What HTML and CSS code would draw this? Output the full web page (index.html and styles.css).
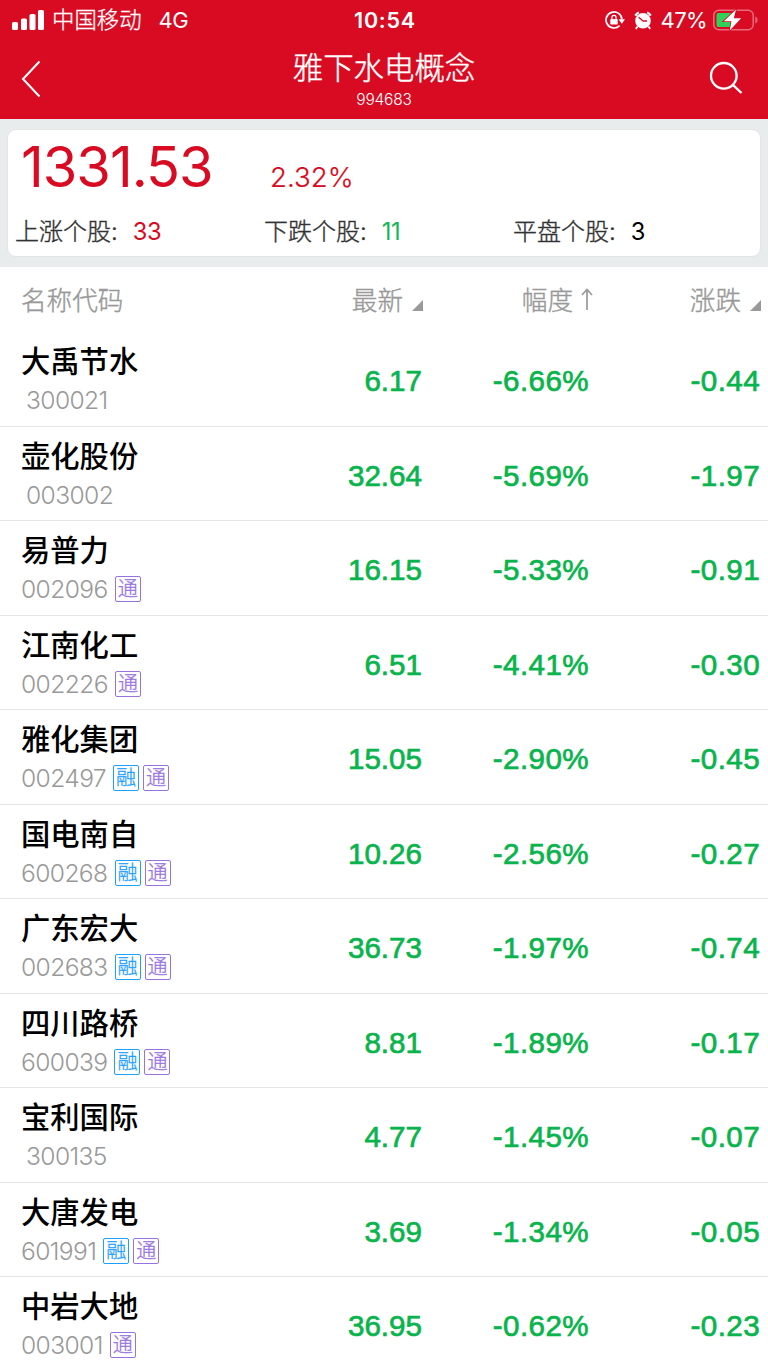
FILE: index.html
```html
<!DOCTYPE html>
<html lang="zh-CN">
  <head>
    <meta charset="UTF-8" />
    <meta name="viewport" content="width=device-width, initial-scale=1.0" />
    <title>雅下水电概念</title>
    <link rel="stylesheet" href="styles.css">
  </head>
  <body>
    <header class="top">
      <div class="status">
        <div class="status-left">
          <svg class="signal" width="32" height="20" viewBox="0 0 32 20" fill="#fff">
            <rect x="0" y="12" width="6" height="8" rx="1.6" />
            <rect x="9" y="8.500" width="6" height="11.500" rx="1.6" />
            <rect x="17.500" y="4" width="6" height="16" rx="1.6" />
            <rect x="26" y="0" width="6" height="20" rx="1.6" />
          </svg>
          <span class="carrier">中国移动</span>
          <span class="network">4G</span>
        </div>
        <div class="time">10:54</div>
        <div class="status-right">
          <svg class="lock" width="20" height="18" viewBox="0 0 20 18" fill="none" stroke="#fff">
            <path d="M14.600 14.700A8 8 0 1 1 17 8.500" stroke-width="1.700" />
            <path d="M13.600 8.200h6.400l-3.200 4.600z" fill="#fff" stroke="none" />
            <rect x="5.300" y="8" width="7.400" height="5.400" rx=".7" fill="#fff" stroke="none" />
            <path d="M6.900 8.500V6.700a2.100 2.300 0 0 1 4.200 0v1.800" stroke-width="1.200" />
          </svg>
          <svg class="alarm" width="18" height="19" viewBox="0 0 18 19" fill="none" stroke="#fff">
            <circle cx="9" cy="9.700" r="7.800" fill="#fff" stroke="none" />
            <path d="M1.200 4.600A10 10 0 0 1 4.800 1.400M13.200 1.400a10 10 0 0 1 3.600 3.200" stroke-width="2.200" />
            <path d="M3.600 15.500l-1.800 2.400M14.400 15.500l1.800 2.400" stroke-width="1.800" />
            <path d="M4.600 6.200L9.200 10H13" stroke="#d80b23" stroke-width="1.300" />
          </svg>
          <span class="percent">47%</span>
          <svg class="battery" width="45" height="22" viewBox="0 0 45 22">
            <rect x=".8" y="1.300" width="39.400" height="19.400" rx="5" fill="none" stroke="#fff" stroke-opacity=".4" stroke-width="1.500" />
            <path d="M42.300 7.500c3 1.200 3 5.800 0 7z" fill="#fff" fill-opacity=".4" />
            <path d="M5.500 4h13v14h-13a2 2 0 0 1-2-2V6a2 2 0 0 1 2-2z" fill="#30d158" />
            <path d="M23 .5L10.800 12.300h7.700L16.700 21.500 28.200 9.300h-7.400z" fill="#fff" stroke="#d80b23" stroke-width="1.600" paint-order="stroke" />
          </svg>
        </div>
      </div>
      <div class="navbar">
        <svg class="back" width="20" height="38" viewBox="0 0 20 38" fill="none" stroke="#fff" stroke-width="2">
          <path d="M18.500 1.500L2 19l16.500 17.500" />
        </svg>
        <div class="title">
          <h1>雅下水电概念</h1>
          <p>994683</p>
        </div>
        <svg class="search" width="34" height="34" viewBox="0 0 34 34" fill="none" stroke="#fff" stroke-width="2.300">
          <circle cx="14.800" cy="14.800" r="12.800" />
          <path d="M23.900 23.900L32.500 32" />
        </svg>
      </div>
    </header>

    <section class="summary">
      <div class="card">
        <div class="quote">
          <span class="index">1331.53</span>
          <span class="change">2.32%</span>
        </div>
        <div class="counts">
          <div>上涨个股:<b class="red">33</b></div>
          <div>下跌个股:<b class="green">11</b></div>
          <div>平盘个股:<b>3</b></div>
        </div>
      </div>
    </section>

    <main class="list">
      <div class="row head">
        <span>名称代码</span>
        <span class="sort">最新<i class="corner"></i></span>
        <span class="sort">幅度<svg class="arrow" width="12" height="23" viewBox="0 0 12 23" fill="none" stroke="#999" stroke-width="1.700"><path d="M6 22V1.500M1 7l5-5.500L11 7" /></svg></span>
        <span class="sort">涨跌<i class="corner"></i></span>
      </div>

      <div class="row">
        <div class="stock"><h2>大禹节水</h2><p class="plain">300021</p></div>
        <span class="num">6.17</span><span class="num signed">-6.66%</span><span class="num signed">-0.44</span>
      </div>
      <div class="row">
        <div class="stock"><h2>壶化股份</h2><p class="plain">003002</p></div>
        <span class="num">32.64</span><span class="num signed">-5.69%</span><span class="num signed">-1.97</span>
      </div>
      <div class="row">
        <div class="stock"><h2>易普力</h2><p>002096<i class="tag tong">通</i></p></div>
        <span class="num">16.15</span><span class="num signed">-5.33%</span><span class="num signed">-0.91</span>
      </div>
      <div class="row">
        <div class="stock"><h2>江南化工</h2><p>002226<i class="tag tong">通</i></p></div>
        <span class="num">6.51</span><span class="num signed">-4.41%</span><span class="num signed">-0.30</span>
      </div>
      <div class="row">
        <div class="stock"><h2>雅化集团</h2><p>002497<i class="tag rong">融</i><i class="tag tong">通</i></p></div>
        <span class="num">15.05</span><span class="num signed">-2.90%</span><span class="num signed">-0.45</span>
      </div>
      <div class="row">
        <div class="stock"><h2>国电南自</h2><p>600268<i class="tag rong">融</i><i class="tag tong">通</i></p></div>
        <span class="num">10.26</span><span class="num signed">-2.56%</span><span class="num signed">-0.27</span>
      </div>
      <div class="row">
        <div class="stock"><h2>广东宏大</h2><p>002683<i class="tag rong">融</i><i class="tag tong">通</i></p></div>
        <span class="num">36.73</span><span class="num signed">-1.97%</span><span class="num signed">-0.74</span>
      </div>
      <div class="row">
        <div class="stock"><h2>四川路桥</h2><p>600039<i class="tag rong">融</i><i class="tag tong">通</i></p></div>
        <span class="num">8.81</span><span class="num signed">-1.89%</span><span class="num signed">-0.17</span>
      </div>
      <div class="row">
        <div class="stock"><h2>宝利国际</h2><p class="plain">300135</p></div>
        <span class="num">4.77</span><span class="num signed">-1.45%</span><span class="num signed">-0.07</span>
      </div>
      <div class="row">
        <div class="stock"><h2>大唐发电</h2><p>601991<i class="tag rong">融</i><i class="tag tong">通</i></p></div>
        <span class="num">3.69</span><span class="num signed">-1.34%</span><span class="num signed">-0.05</span>
      </div>
      <div class="row">
        <div class="stock"><h2>中岩大地</h2><p>003001<i class="tag tong">通</i></p></div>
        <span class="num">36.95</span><span class="num signed">-0.62%</span><span class="num signed">-0.23</span>
      </div>
    </main>
  </body>
</html>
```

FILE: styles.css
```css
* {
  box-sizing: border-box;
  margin: 0;
  padding: 0;
}
body {
  width: 768px;
  height: 1366px;
  overflow: hidden;
  background: #fff;
  color: #000;
  font-family: Inter, "Noto Sans CJK SC", sans-serif;
}
i {
  font-style: normal;
}
svg {
  display: block;
  flex: none;
}

/* status bar + nav */
.top {
  height: 119px;
  background: #d80b23;
  color: #fff;
}
.status {
  display: grid;
  grid-template-columns: 1fr auto 1fr;
  align-items: center;
  height: 40px;
  padding: 0 10px 0 12px;
}
.status-left,
.status-right {
  display: flex;
  align-items: center;
  font-size: 22px;
  line-height: 40px;
}
.status-right {
  justify-content: flex-end;
}
.carrier {
  margin-left: 8px;
  font-size: 22.4px;
  font-weight: 300;
  -webkit-text-stroke: 0.3px #fff;
}
.network {
  margin-left: 17px;
  letter-spacing: -0.4px;
}
.time {
  font-size: 21.5px;
  font-weight: 600;
  letter-spacing: 0.8px;
}
.alarm {
  margin-left: 9px;
}
.percent {
  margin-left: 9px;
  letter-spacing: -0.6px;
}
.battery {
  margin-left: 6px;
}
.navbar {
  display: grid;
  grid-template-columns: 1fr auto 1fr;
  height: 79px;
  padding: 0 21px;
}
.back {
  margin-top: 20px;
}
.title {
  text-align: center;
}
.title h1 {
  margin-top: 6px;
  font-size: 30.4px;
  font-weight: 300;
  line-height: 44px;
  -webkit-text-stroke: 0.4px #fff;
}
.title p {
  font-size: 15.5px;
  font-weight: 300;
  line-height: 20px;
  letter-spacing: -0.2px;
}
.search {
  justify-self: end;
  margin: 21px 4px 0 0;
}

/* index summary */
.summary {
  height: 148px;
  padding: 10px 7px;
  background: #e8ecec;
}
.card {
  height: 128px;
  padding: 0 8px 0 7px;
  border: 1px solid #e3e5e5;
  border-radius: 9px;
  background: #fff;
}
.quote {
  display: grid;
  grid-template-columns: 249px 1fr;
  align-items: baseline;
  height: 78px;
  padding-left: 6px;
  color: #d80b23;
}
.index {
  font-size: 56px;
  line-height: 75px;
  letter-spacing: -1px;
}
.change {
  font-size: 27.6px;
  font-weight: 300;
  -webkit-text-stroke: 0.2px #d80b23;
}
.counts {
  display: grid;
  grid-template-columns: 249px 249px 1fr;
  color: #333;
  font-size: 24px;
  font-weight: 300;
  line-height: 48px;
  -webkit-text-stroke: 0.4px;
}
.counts b {
  margin-left: 15px;
  color: #000;
  font-size: 23.7px;
  font-weight: 400;
  letter-spacing: -0.5px;
  -webkit-text-stroke: 0;
}
.counts .red {
  color: #d80b23;
}
.counts .green {
  color: #12b755;
}

/* stock list */
.row {
  display: grid;
  grid-template-columns: 221px 180px 167px 171px;
  height: 94.55px;
  padding-left: 21px;
  border-bottom: 1px solid #e6e6e6;
}
.head {
  height: 65px;
  border: none;
  color: #999;
  font-size: 25.6px;
  font-weight: 300;
  line-height: 67px;
  -webkit-text-stroke: 0.4px #999;
}
.sort {
  display: flex;
  justify-content: flex-end;
}
.corner {
  width: 11px;
  height: 11px;
  margin: 33px -1px 0 9px;
  background: #999;
  clip-path: polygon(100% 0, 100% 100%, 0 100%);
}
.arrow {
  margin: 21px -4px 0 8px;
}
.stock h2 {
  margin-top: 8px;
  font-size: 29.3px;
  font-weight: 500;
  line-height: 44px;
}
.stock p {
  display: flex;
  align-items: center;
  height: 32px;
  color: #999;
  font-size: 24.6px;
  font-weight: 300;
  letter-spacing: -0.6px;
}
.stock .plain {
  padding-left: 5px;
}
.tag {
  width: 26px;
  height: 26px;
  margin-left: 4px;
  border: 1px solid;
  border-radius: 2px;
  font-size: 20px;
  letter-spacing: 0;
  line-height: 24px;
  text-align: center;
  -webkit-text-stroke: 0.3px;
}
.tag:first-child {
  margin-left: 7px;
}
.rong {
  color: #1ea0ff;
}
.tong {
  color: #9873e0;
}
.num {
  color: #09b44d;
  font-family: "Liberation Sans", sans-serif;
  font-size: 29.6px;
  line-height: 98px;
  text-align: right;
  -webkit-text-stroke: 0.7px #09b44d;
}
.signed {
  letter-spacing: 0.4px;
}
```
